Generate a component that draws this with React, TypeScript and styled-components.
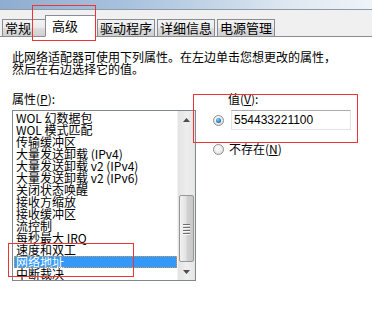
import styled, { createGlobalStyle } from "styled-components";

const GlobalStyle = createGlobalStyle`
  html, body {
    margin: 0;
    padding: 0;
    background: #ffffff;
  }
  body {
    font-family: "Noto Sans CJK SC", "Liberation Sans", sans-serif;
    font-size: 12px;
    color: #000;
  }
`;

const Root = styled.div`
  position: relative;
  width: 372px;
  height: 321px;
  overflow: hidden;
  background: #ffffff;
`;

const TitleStrip = styled.div`
  height: 9px;
  border-bottom: 1px solid #8d9aa8;
  background: linear-gradient(to right, #8fadd0 0%, #a9c2de 35%, #c9d9e9 62%, #dfe8f1 78%, #eef3f8 100%);
`;

const TabBar = styled.div`
  height: 27px;
  box-sizing: border-box;
  display: flex;
  align-items: flex-end;
  gap: 2px;
  padding-left: 2px;
  background: #f0f0f0;
  border-bottom: 1px solid #898c95;
`;

const Tab = styled.div<{ $active?: boolean; $width?: number }>`
  box-sizing: border-box;
  width: ${(p) => (p.$width ? `${p.$width}px` : "auto")};
  height: ${(p) => (p.$active ? "22px" : "17px")};
  margin-bottom: ${(p) => (p.$active ? "-1px" : "0")};
  margin-left: ${(p) => (p.$active ? "-4px" : "0")};
  margin-right: ${(p) => (p.$active ? "-1px" : "0")};
  padding: ${(p) => (p.$active ? "0 0 0 6px" : "0 2px")};
  display: flex;
  align-items: ${(p) => (p.$active ? "center" : "flex-end")};
  font-size: 13px;
  line-height: 16px;
  border: 1px solid #898c95;
  border-bottom: ${(p) => (p.$active ? "1px solid #ffffff" : "none")};
  background: ${(p) =>
    p.$active ? "#ffffff" : "linear-gradient(to bottom, #f3f3f3 0%, #ebebeb 50%, #dddddd 51%, #cfcfcf 100%)"};
  z-index: ${(p) => (p.$active ? 1 : 0)};
`;

const Panel = styled.div`
  padding: 14px 12px 0 12px;
`;

const Intro = styled.p`
  margin: 0;
  font-size: 12px;
  line-height: 12px;
`;

const Columns = styled.div`
  display: grid;
  grid-template-columns: 184px 1fr;
  column-gap: 17px;
  margin-top: 18px;
`;

const FieldLabel = styled.div<{ $indent?: number }>`
  font-size: 12px;
  line-height: 12px;
  padding-left: ${(p) => p.$indent ?? 0}px;
  u {
    text-decoration: underline;
  }
`;

const ListBox = styled.div`
  margin-top: 5px;
  height: 171px;
  box-sizing: border-box;
  border: 1px solid #828790;
  display: flex;
  background: #fff;
`;

const Items = styled.ul`
  flex: 1;
  margin: 0;
  padding: 1px 0 0 0;
  list-style: none;
  overflow: hidden;
`;

const Item = styled.li<{ $selected?: boolean }>`
  height: 12px;
  line-height: 12px;
  font-size: 12px;
  padding-left: 2px;
  margin-left: 1px;
  white-space: pre;
  color: ${(p) => (p.$selected ? "#ffffff" : "#000000")};
  background: ${(p) => (p.$selected ? "#3399ff" : "transparent")};
  outline: ${(p) => (p.$selected ? "1px dotted #d89a3c" : "none")};
  outline-offset: -1px;
`;

const ScrollBar = styled.div`
  width: 17px;
  display: flex;
  flex-direction: column;
  background: linear-gradient(to right, #e3e3e3, #eeeeee 50%, #e6e6e6);
  border-left: 1px solid #f4f4f4;
`;

const ArrowButton = styled.div`
  height: 17px;
  display: flex;
  align-items: center;
  justify-content: center;
  svg {
    display: block;
  }
`;

const Track = styled.div`
  flex: 1;
  display: flex;
  flex-direction: column;
  justify-content: flex-end;
  padding: 0 1px 1px 1px;
`;

const Thumb = styled.div`
  height: 67px;
  box-sizing: border-box;
  border: 1px solid #979797;
  border-radius: 2px;
  background: linear-gradient(to right, #f1f1f1 0%, #e3e3e3 45%, #d1d1d1 55%, #c8c8c8 100%);
  display: flex;
  flex-direction: column;
  align-items: center;
  justify-content: center;
  gap: 2px;
`;

const Grip = styled.span`
  width: 7px;
  height: 1px;
  background: #6e6e6e;
  box-shadow: 0 1px 0 #f8f8f8;
`;

const RightCol = styled.div`
  display: flex;
  flex-direction: column;
`;

const ValueRow = styled.div`
  display: flex;
  align-items: center;
  margin-top: 5px;
  height: 20px;
`;

const Radio = styled.span<{ $checked?: boolean }>`
  width: 11px;
  height: 11px;
  box-sizing: border-box;
  border-radius: 50%;
  border: 1px solid #8e8f8f;
  background: radial-gradient(circle at 40% 35%, #ffffff 0%, #e8e8e8 60%, #cfcfcf 100%);
  display: flex;
  align-items: center;
  justify-content: center;
  flex-shrink: 0;
  &::after {
    content: "";
    display: ${(p) => (p.$checked ? "block" : "none")};
    width: 5px;
    height: 5px;
    border-radius: 50%;
    background: radial-gradient(circle at 40% 35%, #8ad3ff 0%, #1f86c8 55%, #0c4f86 100%);
  }
`;

const ValueInput = styled.div`
  margin-left: 7px;
  width: 120px;
  height: 20px;
  box-sizing: border-box;
  border: 1px solid #e2e3ea;
  border-top-color: #abadb3;
  padding-left: 2px;
  display: flex;
  align-items: center;
  font-family: "Liberation Sans", Arial, sans-serif;
  font-size: 12px;
`;

const NoneRow = styled.div`
  display: flex;
  align-items: center;
  gap: 5px;
  margin-top: 13px;
  font-size: 12px;
  line-height: 12px;
`;

const Mark = styled.div<{ $x: number; $y: number; $w: number; $h: number }>`
  position: absolute;
  left: ${(p) => p.$x}px;
  top: ${(p) => p.$y}px;
  width: ${(p) => p.$w}px;
  height: ${(p) => p.$h}px;
  box-sizing: border-box;
  border: 1px solid #ee3333;
  pointer-events: none;
  z-index: 5;
`;

const tabs = [
  { label: "常规", width: 45 },
  { label: "高级", width: 51, active: true },
  { label: "驱动程序" },
  { label: "详细信息" },
  { label: "电源管理" },
];

const properties = [
  "WOL 幻数据包",
  "WOL 模式匹配",
  "传输缓冲区",
  "大量发送卸载 (IPv4)",
  "大量发送卸载 v2 (IPv4)",
  "大量发送卸载 v2 (IPv6)",
  "关闭状态唤醒",
  "接收方缩放",
  "接收缓冲区",
  "流控制",
  "每秒最大 IRQ",
  "速度和双工",
  "网络地址",
  "中断裁决",
];

function App() {
  return (
    <Root>
      <GlobalStyle />
      <TitleStrip />
      <TabBar>
        {tabs.map((t) => (
          <Tab key={t.label} $active={t.active} $width={t.width}>
            {t.label}
          </Tab>
        ))}
      </TabBar>
      <Panel>
        <Intro>
          此网络适配器可使用下列属性。在左边单击您想更改的属性，
          <br />
          然后在右边选择它的值。
        </Intro>
        <Columns>
          <div>
            <FieldLabel>
              属性(<u>P</u>):
            </FieldLabel>
            <ListBox>
              <Items>
                {properties.map((p) => (
                  <Item key={p} $selected={p === "网络地址"}>
                    {p}
                  </Item>
                ))}
              </Items>
              <ScrollBar>
                <ArrowButton>
                  <svg width="7" height="4" viewBox="0 0 7 4">
                    <path d="M0 4 L3.5 0 L7 4 Z" fill="#4d4d4d" />
                  </svg>
                </ArrowButton>
                <Track>
                  <Thumb>
                    <Grip />
                    <Grip />
                    <Grip />
                    <Grip />
                  </Thumb>
                </Track>
                <ArrowButton>
                  <svg width="7" height="4" viewBox="0 0 7 4">
                    <path d="M0 0 L3.5 4 L7 0 Z" fill="#4d4d4d" />
                  </svg>
                </ArrowButton>
              </ScrollBar>
            </ListBox>
          </div>
          <RightCol>
            <FieldLabel $indent={15}>
              值(<u>V</u>):
            </FieldLabel>
            <ValueRow>
              <Radio $checked />
              <ValueInput>554433221100</ValueInput>
            </ValueRow>
            <NoneRow>
              <Radio />
              <span>
                不存在(<u>N</u>)
              </span>
            </NoneRow>
          </RightCol>
        </Columns>
      </Panel>
      <Mark $x={32} $y={5} $w={64} $h={36} />
      <Mark $x={193} $y={94} $w={165} $h={49} />
      <Mark $x={8} $y={243} $w={126} $h={34} />
    </Root>
  );
}

export default App;
